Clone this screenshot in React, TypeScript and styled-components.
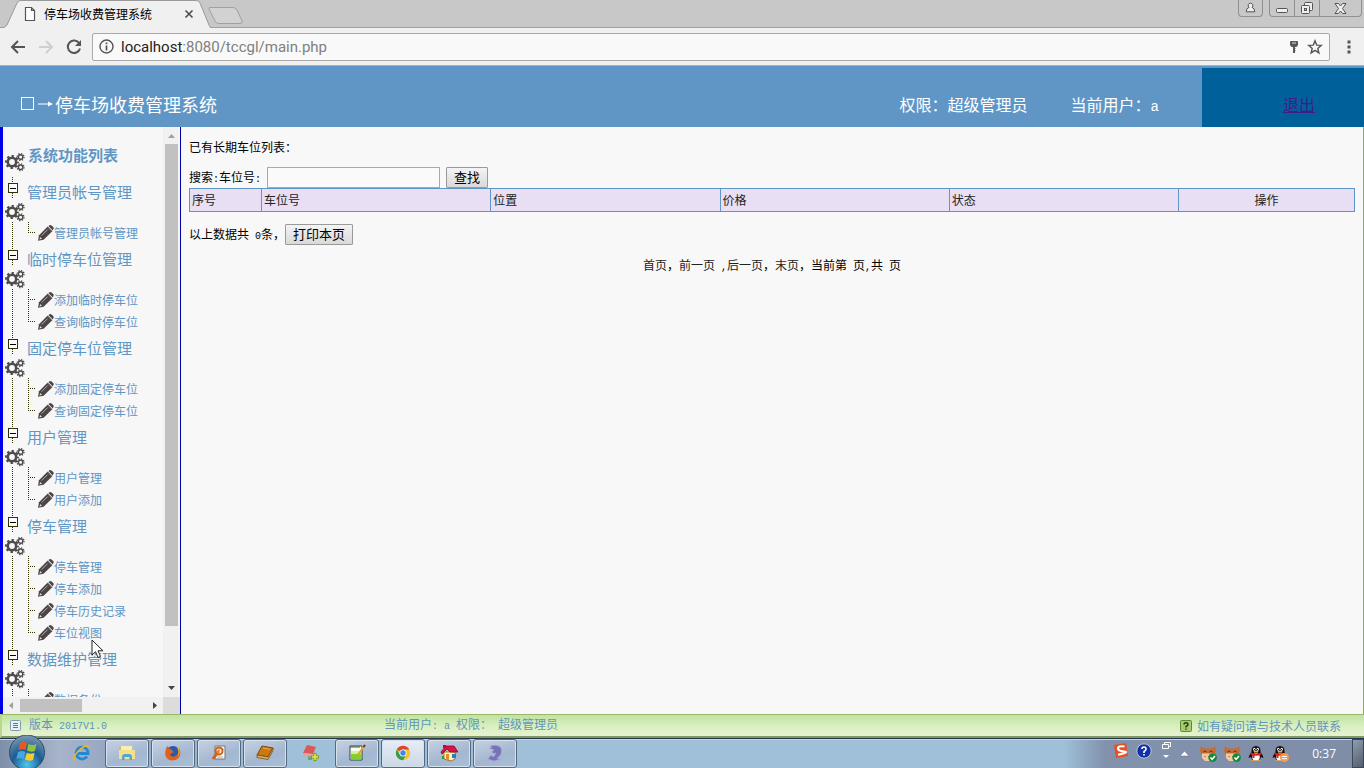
import React from 'react';
import styled, { createGlobalStyle, css } from 'styled-components';

const GlobalStyle = createGlobalStyle`
  *, *::before, *::after { box-sizing: border-box; }
  body {
    margin: 0;
    font-family: "Noto Sans CJK SC", "Liberation Sans", sans-serif;
    font-size: 12px;
    line-height: 18px;
    color: #000;
    background: #f8f8f8;
  }
  button, input { font: inherit; }
`;

const Shell = styled.div`
  display: flex;
  flex-direction: column;
  height: 100vh;
  overflow: hidden;
`;

/* half-width latin characters between Chinese text */
const Half = styled.span`
  font-family: "Liberation Mono", monospace;
  font-size: ${(p: { $big?: boolean }) => (p.$big ? '14px' : '10px')};
  white-space: pre;
`;

/* ---------- browser window ---------- */
const TabStrip = styled.div`
  display: flex;
  flex: none;
  height: 28px;
  background: #c8c8c8;
  box-shadow: inset 0 -1px #a2a2a2;
`;
const Tab = styled.div`
  position: relative;
  width: 212px;
  display: flex;
  align-items: center;
  padding: 0 18px 0 23px;
  > span { flex: 1; padding-left: 7px; }
  > svg, > span, > button { z-index: 1; }
`;
const TabShape = styled.svg`
  position: absolute;
  left: 0;
  top: 0;
`;
const PlainButton = styled.button`
  display: flex;
  align-items: center;
  justify-content: center;
  padding: 0;
  border: 0;
  background: none;
  color: #555;
`;
const NewTab = styled(PlainButton)`
  align-items: flex-start;
  padding-top: 7px;
  margin-left: -4px;
`;
const WindowControls = styled.div`
  display: flex;
  margin-left: auto;
  margin-right: 2px;
  height: 17px;
`;
const WinButton = styled(PlainButton)<{ $w: number; $first?: boolean; $last?: boolean; $alone?: boolean }>`
  width: ${p => p.$w}px;
  border: 1px solid #909090;
  border-top: 0;
  border-left-width: ${p => (p.$first || p.$alone ? 1 : 0)}px;
  border-radius: 0 0 ${p => (p.$last || p.$alone ? 4 : 0)}px ${p => (p.$first || p.$alone ? 4 : 0)}px;
  margin-right: ${p => (p.$alone ? 6 : 0)}px;
`;
const Toolbar = styled.div`
  display: flex;
  flex: none;
  align-items: center;
  height: 38px;
  padding: 0 5px 0 4px;
  background: #f0f0f0;
  border-bottom: 1px solid #aeaeae;
`;
const NavButton = styled(PlainButton)`
  width: 28px;
  height: 28px;
`;
const Omnibox = styled.div`
  display: flex;
  flex: 1;
  align-items: center;
  height: 28px;
  margin-left: 4px;
  padding: 0 6px;
  background: #f9f9f9;
  border: 1px solid #a9a9a9;
  border-radius: 2px;
`;
const Url = styled.div`
  flex: 1;
  padding-left: 7px;
  font-family: Roboto, sans-serif;
  font-size: 15px;
  line-height: 20px;
  color: #808080;
  b { font-weight: 400; color: #222; }
`;
const OmniIcons = styled.div`
  display: flex;
  align-items: center;
  gap: 8px;
`;
const MenuButton = styled(PlainButton)`
  width: 20px;
  margin-left: 9px;
`;

/* ---------- application ---------- */
const Banner = styled.header`
  display: flex;
  flex: none;
  height: 61px;
  padding-top: 2px;
  background: #6096c6;
  color: #fff;
  font-size: 16px;
  line-height: 24px;
`;
const BannerTitle = styled.h1`
  display: flex;
  align-items: center;
  flex: 1;
  margin: 0;
  padding: 24px 0 11px 20px;
  font-size: 18px;
  font-weight: 400;
  svg { margin-right: 1px; }
`;
const BannerInfo = styled.div`
  padding-top: 24px;
  margin-right: 43px;
`;
const Exit = styled.div`
  width: 162px;
  padding: 24px 49px 0 0;
  text-align: right;
  background: #00609a;
  a { color: #46198b; }
`;
const Middle = styled.div`
  display: flex;
  flex: 1;
  min-height: 0;
`;
const Sidebar = styled.nav`
  display: grid;
  flex: none;
  grid-template-columns: 1fr 17px;
  grid-template-rows: minmax(0, 1fr) 17px;
  width: 181px;
  border-left: 3px solid #0000e8;
  border-right: 1px solid #0000a8;
  background: #f7f7f7;
`;
const Tree = styled.div`
  overflow: hidden;
  color: #5f96c4;
  a { color: inherit; text-decoration: none; white-space: nowrap; }
`;
const TreeTitle = styled.div`
  display: flex;
  height: 50px;
  padding: 17px 0 0 2px;
  h2 { margin: 0 0 0 3px; font-size: 15px; line-height: 22px; font-weight: 700; }
  svg { margin-top: 8px; }
`;
const Group = styled.section`
  position: relative;
`;
const GroupHead = styled.div`
  display: grid;
  grid-template-columns: 24px 1fr;
  grid-template-rows: 25px 20px;
  height: 45px;
  a { font-size: 15px; line-height: 22px; padding-top: 4px; }
  > svg { margin-left: 2px; }
`;
const dots = 'repeating-linear-gradient(180deg, #333300 0 1px, transparent 1px 2px)';
const Toggle = styled.div`
  display: flex;
  flex-direction: column;
  align-items: flex-start;
  padding-left: 4px;
  &::before, &::after {
    content: "";
    width: 1px;
    margin-left: 5px;
    background: ${dots};
    height: 6px;
  }
`;
const ToggleBox = styled.button`
  display: flex;
  align-items: center;
  justify-content: center;
  width: 10px;
  height: 10px;
  margin-left: 1px;
  padding: 0;
  border: 1px solid #333300;
  background: #fff;
  &::before { content: ""; width: 6px; height: 1px; background: #000; }
`;
const Children = styled.ul`
  margin: 0 0 0 9px;
  padding: 0;
  list-style: none;
  background: ${dots} 0 0 / 1px 100% no-repeat;
`;
const Leaf = styled.li`
  display: grid;
  grid-template-columns: 10px 15px 1fr;
  align-items: center;
  height: 22px;
  padding-left: 16px;
  a { padding-left: 1px; }
`;
const Branch = styled.span`
  align-self: stretch;
  width: 7px;
  background:
    ${dots} 0 0 / 1px 100% no-repeat,
    repeating-linear-gradient(90deg, #333300 0 1px, transparent 1px 2px) 0 10px / 7px 1px no-repeat;
  ${Leaf}:last-child & { height: 11px; }
`;
const VScroll = styled.div`
  display: flex;
  flex-direction: column;
  align-items: flex-end;
  background: #f1f1f1;
  border-right: 2px solid #f7f7f7;
  > svg { flex: none; }
`;
const VTrack = styled.div`
  flex: 1;
  width: 13px;
  &::before { content: ""; display: block; height: 90%; background: #c1c1c1; }
`;
const HScroll = styled.div`
  display: flex;
  align-items: center;
  background: #f1f1f1;
`;
const HTrack = styled.div`
  flex: 1;
  height: 13px;
  &::before { content: ""; display: block; width: 49%; height: 13px; background: #c1c1c1; }
`;
const Corner = styled.div`
  background: #dcdcdc;
`;
const Content = styled.main`
  flex: 1;
  min-width: 0;
  padding: 11px 8px 0;
  background: #f8f8f8;
  border-right: 1px solid #8cb050;
  p { margin: 0; }
`;
const SearchForm = styled.form`
  display: flex;
  align-items: center;
  gap: 6px;
  height: 21px;
  margin-top: 11px;
  label { padding-top: 2px; }
`;
const TextBox = styled.input`
  width: 173px;
  height: 21px;
  padding: 1px 2px;
  border: 1px solid #a9a9a9;
  background: #fafafa;
`;
const GreyButton = styled.button`
  height: 21px;
  padding: 0 7px 2px;
  border: 1px solid #9a9a9a;
  border-radius: 1px;
  background: linear-gradient(#f4f4f4, #d9d9d9);
  font-size: 13px;
  line-height: 17px;
  color: #000;
`;
const Grid = styled.table`
  width: 100%;
  table-layout: fixed;
  border-collapse: collapse;
  background: #e8dff4;
  th {
    height: 23px;
    padding: 0 2px;
    border: 1px solid #6096c6;
    font-weight: 400;
    text-align: left;
    color: #222;
    &:first-child { width: 72px; }
    &:last-child { width: 176px; text-align: center; }
  }
`;
const Summary = styled.div`
  display: flex;
  align-items: center;
  height: 21px;
  margin-top: 12px;
  span { padding-top: 1px; }
`;
const Pager = styled.div`
  margin-top: 11px;
  text-align: center;
  a { color: #222; text-decoration: none; }
`;
const StatusBar = styled.footer`
  display: grid;
  flex: none;
  grid-template-columns: 382px 1fr auto;
  align-items: center;
  height: 24px;
  padding-right: 23px;
  border-top: 1px solid #9db668;
  border-bottom: 2px solid #7f9a68;
  border-left: 2px solid #b8d88c;
  background: linear-gradient(#c0e4a0, #dcf0c4 60%, #e6f2d0);
  color: #5f96bc;
  a { display: flex; align-items: center; gap: 5px; color: inherit; text-decoration: none; }
`;
const Version = styled.div`
  display: flex;
  align-items: center;
  gap: 8px;
  padding-left: 8px;
`;

/* ---------- desktop task bar ---------- */
const TaskBar = styled.div`
  display: flex;
  flex: none;
  height: 30px;
  padding-left: 8px;
  border-top: 1px solid #26344a;
  background: linear-gradient(90deg, #7e8fa9, #a7b4ca 60px, #97a8c4 105px, #9fc0d8 280px, #9fc0d8 78%, #8292ad 81%, #7f8da7);
  box-shadow: inset 0 1px #c6d3e2;
`;
const StartButton = styled(PlainButton)`
  width: 38px;
  margin-top: -4px;
  position: relative;
`;
const TaskButton = styled(PlainButton)<{ $flat?: boolean; $active?: boolean }>`
  width: 44px;
  margin-right: 2px;
  padding-bottom: 1px;
  border-radius: 3px;
  ${p =>
    !p.$flat &&
    css`
      border: 1px solid #55687f;
      box-shadow: inset 0 0 0 1px #d7e1ee;
      background: ${p.$active ? 'linear-gradient(#e6edf5, #ccd8e6)' : 'linear-gradient(160deg, #c6d2e3, #a3b7d0 60%, #a9c0d8)'};
    `}
`;
const QuickLaunch = styled(TaskButton)`
  width: 57px;
  padding-left: 14px;
`;
const Tray = styled.div`
  display: flex;
  align-items: center;
  gap: 6px;
  margin-left: auto;
  > svg { flex: none; }
`;
const Clock = styled.time`
  padding: 0 10px 0 16px;
  font-family: "Open Sans", sans-serif;
  font-size: 12px;
  color: #fff;
`;
const ShowDesktop = styled.button`
  align-self: stretch;
  width: 12px;
  padding: 0;
  border: 1px solid #3c485a;
  background: linear-gradient(135deg, #909dac, #525e6e);
`;
const Pointer = styled.svg`
  position: absolute;
  left: 91px;
  top: 639px;
  pointer-events: none;
`;

const Gears = () => (
  <svg width="20" height="20" viewBox="0 0 20 20" fill="none" stroke="#4e4b4b">
    <circle cx="7" cy="10" r="4.2" strokeWidth="2.6" />
    <circle cx="7" cy="10" r="6" strokeWidth="2" strokeDasharray="2.36 2.36" strokeDashoffset="1.18" />
    <circle cx="15.6" cy="5" r="2.200" strokeWidth="1.400" />
    <circle cx="15.6" cy="5" r="3.400" strokeWidth="1.300" strokeDasharray="1.330 1.330" />
    <circle cx="15.6" cy="15.200" r="2.200" strokeWidth="1.400" />
    <circle cx="15.6" cy="15.200" r="3.400" strokeWidth="1.300" strokeDasharray="1.330 1.330" />
  </svg>
);

const Pencil = () => (
  <svg width="16" height="16" viewBox="0 0 16 16">
    <path d="M0 15.700 1 10.300 9.700 1.600 14.300 6.200 5.600 14.800Z" fill="#4b4545" />
    <path d="M10.400 1 11.500 .2q1-.5 2 .3l1.700 1.600q.9 1 .2 2l-.7 1.300Z" fill="#4b4545" />
    <path d="m9.600 2 4.300 4.300" stroke="#8c8080" strokeWidth=".8" />
    <path d="M3.600 10.600 9.600 4.600" stroke="#b5acae" strokeWidth="1" />
    <path d="M1.400 14.400 2.200 12 4 13.700Z" fill="#f1d7c7" />
  </svg>
);

const groups = [
  { title: '管理员帐号管理', items: ['管理员帐号管理'] },
  { title: '临时停车位管理', items: ['添加临时停车位', '查询临时停车位'] },
  { title: '固定停车位管理', items: ['添加固定停车位', '查询固定停车位'] },
  { title: '用户管理', items: ['用户管理', '用户添加'] },
  { title: '停车管理', items: ['停车管理', '停车添加', '停车历史记录', '车位视图'] },
  { title: '数据维护管理', items: ['数据备份'] },
];

const columns = ['序号', '车位号', '位置', '价格', '状态', '操作'];

const Cat = () => (
  <svg width="18" height="18" viewBox="0 0 18 18">
    <path d="M1 1 4 3.5H12L15 1 16 6 14 9.5H2L0 6Z" fill="#c96a32" />
    <path d="M2 8.5H14L13 13 11 16H5L2 13Z" fill="#f4c9a0" />
    <path d="M3.5 7 5 6 6.5 7M9.5 7 11 6 12.5 7" stroke="#5c2a10" fill="none" />
    <path d="M5 11v1M9 11v1" stroke="#8a4a28" />
    <circle cx="12.6" cy="12.6" r="4.3" fill="#148a3c" />
    <path d="m10.4 12.5 1.7 1.8 2.9-3.3" stroke="#fff" strokeWidth="1.5" fill="none" />
  </svg>
);

const Penguin = ({ badge }: { badge?: boolean }) => (
  <svg width="18" height="18" viewBox="0 0 18 18">
    <path d="M3.5 7Q3 1 8 1t4.500 6Q15 10 15.500 13L13 12Q12 16 8 16T3 12L.5 13Q1 10 3.500 7Z" fill="#111" />
    <ellipse cx="8" cy="12" rx="3.800" ry="3.800" fill="#fff" />
    <path d="M3 7.500Q8 10 13 7.500L13.500 9.500Q8 12 2.500 9.500ZM4.500 10h2v3h-2Z" fill="#d8202c" />
    <ellipse cx="6.300" cy="4.300" rx="1.200" ry="1.500" fill="#fff" />
    <ellipse cx="9.700" cy="4.300" rx="1.200" ry="1.500" fill="#fff" />
    <path d="M6.500 4v1M9.500 4v1" stroke="#111" />
    <ellipse cx="8" cy="6.700" rx="2.500" ry=".9" fill="#f5a623" />
    <path d="M3 16q2-2 4.500 0ZM8.500 16q2.500-2 4.500 0Z" fill="#f5a623" />
    {badge && (
      <g>
        <circle cx="12.500" cy="12.500" r="4.500" fill="#f59b45" />
        <path d="M10 11.500h5M10 13.700h5" stroke="#fff" />
      </g>
    )}
  </svg>
);

const taskIcons: { name: string; flat?: boolean; active?: boolean; art: React.ReactNode }[] = [
  {
    name: '资源管理器',
    art: (
      <>
        <path d="M1 3h6l1 2h9v10H1Z" fill="#d8bc60" />
        <path d="M3 2h11v6H3Z" fill="#f8f0b0" />
        <path d="M1 6h16v9H1Z" fill="#f4df8c" />
        <path d="M4 16v-3q0-3 3-3h4q3 0 3 3v3h-2.500v-3h-5v3Z" fill="#4ba9d4" />
      </>
    ),
  },
  {
    name: 'Firefox',
    art: (
      <>
        <circle cx="9" cy="9" r="7" fill="#2a5ba8" />
        <path d="M2 5Q-.5 12 4.500 15.500 10 18 14.500 14 18 9 15 3.500 15 8 13 11 10 14 7 12 5 10 8 9L10 8Q7 6 7.500 5L4.500 4.500 4 2Q2 3 2 5Z" fill="#e2601a" />
        <path d="M15 3.500Q17 9 13.500 13 16 7 13 4Z" fill="#f8b02c" />
      </>
    ),
  },
  {
    name: '查找工具',
    art: (
      <>
        <path d="M5 2h10v13H5Z" fill="#f8f8f8" stroke="#777" />
        <path d="M7 13h6M12 5h2" stroke="#aaa" />
        <circle cx="9" cy="7" r="3.500" fill="#fff3e0" stroke="#cf6315" strokeWidth="2" />
        <path d="M6.500 10 3 15" stroke="#cf6315" strokeWidth="3" />
        <path d="M9 5v4H7V7h2" stroke="#cf6315" fill="none" />
      </>
    ),
  },
  {
    name: '词典',
    art: (
      <>
        <path d="M6 2 17 4 12 13 1 11Z" fill="#c87914" stroke="#7c4808" />
        <path d="M1 11v2.500l11 2 5-9V4l-5 9Z" fill="#e0b468" stroke="#7c4808" strokeWidth=".8" />
        <path d="m7 4 7 1.300" stroke="#edb04c" />
      </>
    ),
  },
  {
    name: '数据库工具',
    flat: true,
    art: (
      <>
        <path d="M5 1 14 3 11 10 1 9Z" fill="#d95858" />
        <path d="M1 9 11 10 9 13 3 12Z" fill="#e6a0a0" />
        <path d="m6 12 4 1v3H6Z" fill="#62ae62" />
        <path d="M13 9v8M9 13h8" stroke="#789a22" strokeWidth="3" />
        <path d="M13 10v6M10 13h6" stroke="#f0e93c" strokeWidth="1.500" />
      </>
    ),
  },
  {
    name: '记事本',
    art: (
      <>
        <path d="M2 2h12v14H2Z" fill="#fafff0" stroke="#344" />
        <path d="M3 10h10v5H3Z" fill="#83ce33" />
        <path d="M3 7h10v3H3Z" fill="#d4f09a" />
        <path d="M3 2v2M5 2v2M7 2v2M9 2v2M11 2v2" stroke="#555" />
        <path d="m16 2-6 9" stroke="#e0a51e" strokeWidth="2" />
        <path d="m17 1-1.500 2" stroke="#842020" strokeWidth="2" />
      </>
    ),
  },
  {
    name: 'Chrome',
    active: true,
    art: (
      <>
        <circle cx="9" cy="9" r="7.200" fill="#f3c42c" />
        <path d="M9 9 2.800 5.400A7.200 7.200 0 0 1 15.200 5.400H9Z" fill="#dc4638" />
        <path d="M2.800 5.400A7.200 7.200 0 0 0 9 16.200L12 10.800 9 9 5.900 10.800Z" fill="#2f9d58" />
        <circle cx="9" cy="9" r="3.500" fill="#fff" />
        <circle cx="9" cy="9" r="2.700" fill="#4384e8" />
      </>
    ),
  },
  {
    name: '家园',
    art: (
      <>
        <path d="M4 8h11v7l-4 2-7-2Z" fill="#fff1c8" stroke="#8d5a18" strokeWidth=".8" />
        <path d="M1 8 6 2 14 2 18 8 10 8 7 5 2 10Z" fill="#d81646" stroke="#8a0824" strokeWidth=".8" />
        <path d="M3 1h3v3H3Z" fill="#b01232" />
        <path d="M6 10h3v6H6Z" fill="#e58e1d" />
        <path d="M12 10h4v4h-4Z" fill="#2583a8" />
        <path d="M2 12h2v3H2Z" fill="#369a38" />
      </>
    ),
  },
  {
    name: 'MySQL',
    art: (
      <path d="M4 2Q12 0 15 4 17 11 11 14L14 15 8 17 2 15 5 11 7 13Q9 12 10 9L7 9.500 6 7.500 8 6 3 4 6 3.500Z" fill="#7873b6" stroke="#a7a4d8" strokeWidth=".6" />
    ),
  },
];

export default function App() {
  return (
    <Shell lang="zh-CN">
      <GlobalStyle />
      <TabStrip>
        <Tab>
          <TabShape width="212" height="28" viewBox="0 0 212 28">
            <path d="M0 28.500Q5 28 7 25L17 3Q18 .5 21 .5H196Q199 .5 200 3L209 25Q210 28 212 28.500Z" fill="#f0f0f0" stroke="#999" />
          </TabShape>
          <svg width="14" height="16" viewBox="0 0 14 16">
            <path d="M2.500 1.500h6l3 3v10h-9ZM8.500 1.500v3h3" fill="#fff" stroke="#555" strokeWidth="1.200" />
          </svg>
          <span>停车场收费管理系统</span>
          <PlainButton aria-label="关闭标签页">
            <svg width="10" height="10" viewBox="0 0 10 10">
              <path d="m1.500 1.500 7 7m0-7-7 7" stroke="#4c4c4c" strokeWidth="1.600" />
            </svg>
          </PlainButton>
        </Tab>
        <NewTab aria-label="新标签页">
          <svg width="36" height="18" viewBox="0 0 36 18">
            <path d="M2 .5H25Q28 .5 29 3L34 14Q35 16.500 32 16.500H11Q8 16.500 7 14L1 2Q.5 .5 2 .5Z" fill="#d2d2d2" stroke="#a0a0a0" />
          </svg>
        </NewTab>
        <WindowControls>
          <WinButton $w={25} $alone aria-label="用户">
            <svg width="11" height="12" viewBox="0 0 11 12">
              <path d="M5.500 1.200a2.300 2.300 0 0 1 1.500 4.100Q9.800 6.300 9.800 9.800H1.200Q1.200 6.300 4 5.300A2.300 2.300 0 0 1 5.500 1.200Z" fill="#eee" stroke="#555" />
            </svg>
          </WinButton>
          <WinButton $w={26} $first aria-label="最小化">
            <svg width="14" height="12" viewBox="0 0 14 12">
              <rect x="1.500" y="6.500" width="11" height="4" rx="1" fill="#eee" stroke="#555" />
            </svg>
          </WinButton>
          <WinButton $w={25} aria-label="还原">
            <svg width="14" height="13" viewBox="0 0 14 13">
              <rect x="4.500" y=".5" width="8" height="8" rx="1" fill="#eee" stroke="#555" />
              <rect x="1.500" y="3.500" width="8" height="8" rx="1" fill="#eee" stroke="#555" />
              <rect x="4.500" y="6.500" width="2" height="2" fill="#ccc" stroke="#555" />
            </svg>
          </WinButton>
          <WinButton $w={42} $last aria-label="关闭">
            <svg width="13" height="11" viewBox="0 0 13 11">
              <path d="M1 .5h3.500L6.500 3l2-2.500H12L8.500 5.500 12 10.500H8.500L6.500 8l-2 2.500H1L4.500 5.500Z" fill="#eee" stroke="#555" />
            </svg>
          </WinButton>
        </WindowControls>
      </TabStrip>
      <Toolbar>
        <NavButton aria-label="后退">
          <svg width="16" height="14" viewBox="0 0 16 14">
            <path d="M15 7H2M8 1 2 7l6 6" fill="none" stroke="#555" strokeWidth="2" />
          </svg>
        </NavButton>
        <NavButton aria-label="前进">
          <svg width="16" height="14" viewBox="0 0 16 14">
            <path d="M1 7h13M8 1l6 6-6 6" fill="none" stroke="#cfcfcf" strokeWidth="2" />
          </svg>
        </NavButton>
        <NavButton aria-label="刷新">
          <svg width="16" height="16" viewBox="0 0 16 16">
            <path d="M13.300 4.500A6.200 6.200 0 1 0 14 9.500" fill="none" stroke="#555" strokeWidth="2" />
            <path d="M15 1v6H9Z" fill="#555" />
          </svg>
        </NavButton>
        <Omnibox>
          <svg width="15" height="15" viewBox="0 0 15 15">
            <circle cx="7.500" cy="7.500" r="6.500" fill="none" stroke="#555" strokeWidth="1.400" />
            <path d="M7.500 6.500v5M7.500 3.500v1.700" stroke="#555" strokeWidth="1.700" />
          </svg>
          <Url><b>localhost</b>:8080/tccgl/main.php</Url>
          <OmniIcons>
            <svg width="10" height="14" viewBox="0 0 10 14">
              <path d="M1 1.500Q1 1 2 1h6q1 0 1 .5V5L7.500 7h-5L1 5Z" fill="#555" />
              <path d="M3 3h4" stroke="#ddd" />
              <path d="M5 7v6" stroke="#555" strokeWidth="2" />
              <path d="M6.500 8v4" stroke="#aaa" strokeDasharray="1 1" />
            </svg>
            <svg width="16" height="16" viewBox="0 0 16 16">
              <path d="m8 1.800 1.700 4.300 4.600.3-3.500 3 1.100 4.500L8 11.400l-3.900 2.500 1.100-4.500-3.500-3 4.600-.3Z" fill="none" stroke="#555" strokeWidth="1.400" />
            </svg>
          </OmniIcons>
        </Omnibox>
        <MenuButton aria-label="菜单">
          <svg width="4" height="14" viewBox="0 0 4 14">
            <path d="M.5 .5h3v3h-3ZM.5 5.500h3v3h-3ZM.5 10.500h3v3h-3Z" fill="#555" />
          </svg>
        </MenuButton>
      </Toolbar>

      <Banner>
        <BannerTitle>
          <svg width="34" height="16" viewBox="0 0 34 16">
            <rect x="1.500" y="1.500" width="12" height="12" fill="none" stroke="#fff" />
            <path d="M18 8h13" stroke="#fff" />
            <path d="M28 5.500 33 8l-5 2.500Z" fill="#fff" />
          </svg>
          停车场收费管理系统
        </BannerTitle>
        <BannerInfo>权限：超级管理员</BannerInfo>
        <BannerInfo>当前用户：<Half $big>a</Half></BannerInfo>
        <Exit><a href="#exit">退出</a></Exit>
      </Banner>

      <Middle>
        <Sidebar>
          <Tree>
            <TreeTitle>
              <Gears />
              <h2>系统功能列表</h2>
            </TreeTitle>
            {groups.map(g => (
              <Group key={g.title}>
                <GroupHead>
                  <Toggle><ToggleBox aria-label={'收起' + g.title} /></Toggle>
                  <a href="#group">{g.title}</a>
                  <Gears />
                </GroupHead>
                <Children>
                  {g.items.map(item => (
                    <Leaf key={item}>
                      <Branch />
                      <Pencil />
                      <a href="#page">{item}</a>
                    </Leaf>
                  ))}
                </Children>
              </Group>
            ))}
          </Tree>
          <VScroll>
            <svg width="13" height="17" viewBox="0 0 13 17"><path d="M3 11 6.500 7 10 11Z" fill="#a0a0a0" /></svg>
            <VTrack />
            <svg width="13" height="17" viewBox="0 0 13 17"><path d="M3 6H10L6.500 10Z" fill="#444" /></svg>
          </VScroll>
          <HScroll>
            <svg width="17" height="13" viewBox="0 0 17 13"><path d="M10 3V10L6 6.500Z" fill="#a0a0a0" /></svg>
            <HTrack />
            <svg width="17" height="13" viewBox="0 0 17 13"><path d="M7 3V10L11 6.500Z" fill="#444" /></svg>
          </HScroll>
          <Corner />
        </Sidebar>
        <Content>
          <p>已有长期车位列表：</p>
          <SearchForm onSubmit={e => e.preventDefault()}>
            <label htmlFor="space">搜索<Half>:</Half>车位号<Half>:</Half></label>
            <TextBox id="space" type="text" />
            <GreyButton type="submit">查找</GreyButton>
          </SearchForm>
          <Grid>
            <thead>
              <tr>{columns.map(c => <th key={c} scope="col">{c}</th>)}</tr>
            </thead>
          </Grid>
          <Summary>
            <span>以上数据共<Half> 0</Half>条，</span>
            <GreyButton type="button">打印本页</GreyButton>
          </Summary>
          <Pager>
            <a href="#first">首页</a>，<a href="#prev">前一页</a><Half> ,</Half><a href="#next">后一页</a>，<a href="#last">末页</a>，当前第<Half> </Half>页<Half>,</Half>共<Half> </Half>页
          </Pager>
        </Content>
      </Middle>

      <StatusBar>
        <Version>
          <svg width="11" height="11" viewBox="0 0 11 11">
            <rect x=".5" y=".5" width="10" height="10" rx="1" fill="#e8f2f4" stroke="#7d9cb4" />
            <path d="M3 3.500h5M3 5.500h5M3 7.500h5" stroke="#567c8c" />
          </svg>
          <span>版本<Half> 2017V1.0</Half></span>
        </Version>
        <span>当前用户<Half>: a </Half>权限：<Half> </Half>超级管理员</span>
        <a href="#help">
          <svg width="12" height="12" viewBox="0 0 12 12">
            <rect x=".5" y=".5" width="11" height="11" rx="1" fill="#a8cc70" stroke="#5f8838" />
            <path d="M4 4.500Q4 2.700 6 2.700T8 4.500Q8 5.500 6 6.500V7.500M6 8.500v1.300" fill="none" stroke="#24400e" strokeWidth="1.500" />
          </svg>
          如有疑问请与技术人员联系
        </a>
      </StatusBar>

      <TaskBar>
        <StartButton aria-label="开始">
          <svg width="38" height="34" viewBox="0 0 38 34">
            <defs>
              <radialGradient id="orb" cx="50%" cy="85%" r="85%">
                <stop offset="0" stopColor="#4fc6ee" />
                <stop offset=".5" stopColor="#1d5d92" />
                <stop offset="1" stopColor="#7f9ab2" />
              </radialGradient>
            </defs>
            <circle cx="19" cy="17.500" r="17.500" fill="url(#orb)" stroke="#2c4c6c" />
            <path d="M12 8Q16 6 19 8L17.500 15Q14 13.500 10.500 15Z" fill="#e65a22" />
            <path d="M20.500 9Q24 11 28.500 9L27 16Q23 17.500 19 15.500Z" fill="#8fc43c" />
            <path d="M10 17Q14 15 17.200 17L15.700 24Q12 22 8.500 24Z" fill="#48a6e4" />
            <path d="M18.700 18Q22.500 19.500 26.500 18L25 25Q21 26.500 17 24.500Z" fill="#fbca2e" />
          </svg>
        </StartButton>
        <QuickLaunch $flat aria-label="Internet Explorer">
          <svg width="18" height="18" viewBox="0 0 18 18">
            <path d="M14.500 6.500A6 6 0 1 0 14 12.500M4 9.500H15Q15 7.500 14.500 6.500" fill="none" stroke="#2387d4" strokeWidth="2.800" />
            <path d="M2 16Q-1 14 5 7.500 12 0 16.500 2.500" fill="none" stroke="#e8b52c" strokeWidth="1.600" />
          </svg>
        </QuickLaunch>
        {taskIcons.map(t => (
          <TaskButton key={t.name} $flat={t.flat} $active={t.active} aria-label={t.name}>
            <svg width="18" height="18" viewBox="0 0 18 18">{t.art}</svg>
          </TaskButton>
        ))}
        <Tray>
          <svg width="80" height="26" viewBox="0 0 80 26">
            <path d="m0 4 12-2 2 13-12 2Z" fill="#e84e20" />
            <path d="M10.500 5.500Q4 4.500 4 7.300T10 10.500 4 13.800" fill="none" stroke="#fff" strokeWidth="2.200" />
            <circle cx="30" cy="10" r="7.200" fill="#1230a8" stroke="#b8c8dc" />
            <path d="M28 8Q28 6 30 6T32 8Q32 9.500 30 10.500V12M30 13v1.500" fill="none" stroke="#fff" strokeWidth="1.600" />
            <path d="M50.500 3.500v-2h6v4h-2M48.500 3.500h6v4h-6Z" fill="none" stroke="#fff" />
            <path d="M49 14h6l-3 3Z" fill="#fff" />
            <path d="m66 15 4.500-5 4.500 5Z" fill="#fff" stroke="#5c6c84" strokeWidth=".5" />
          </svg>
          <Cat />
          <Cat />
          <Penguin />
          <Penguin badge />
          <Clock>0:37</Clock>
          <ShowDesktop aria-label="显示桌面" />
        </Tray>
      </TaskBar>
      <Pointer width="13" height="20" viewBox="0 0 13 20">
        <path d="M1 1V16L4.500 12.700 7 18.500 9.500 17.400 7 11.800H12Z" fill="#fff" stroke="#222" />
      </Pointer>
    </Shell>
  );
}
